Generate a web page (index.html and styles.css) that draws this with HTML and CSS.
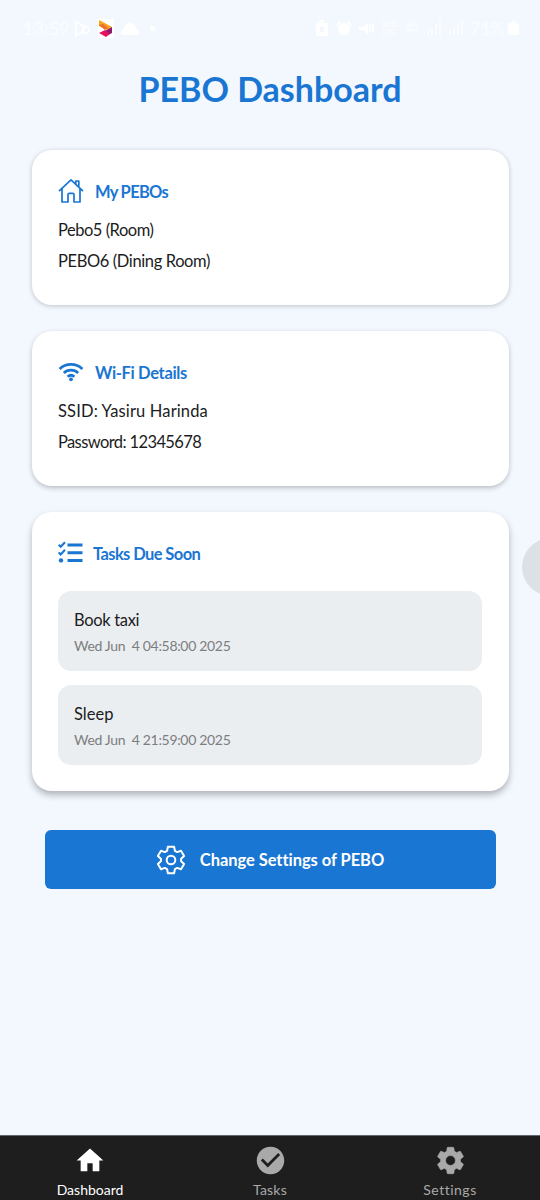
FILE: index.html
```html
<!DOCTYPE html>
<html lang="en">
<head>
<meta charset="utf-8">
<title>PEBO Dashboard</title>
<link rel="stylesheet" href="styles.css">
</head>
<body>
<div class="app">
  <header class="status">
    <div class="status-left">
      <span class="clock">13:59</span>
      <svg width="17" height="17" viewBox="0 0 17 17" fill="none" stroke="#fff" stroke-width="1.6"><path d="M2 1.5v14l7-4M2 1.5l10 6"/><circle cx="12" cy="10" r="3.2"/></svg>
      <svg class="brand" width="16" height="19" viewBox="0 0 16 19"><path fill="#fff" d="M0 0h16v19H0z"/><path fill="#f9a21b" d="M1 1l13 7-5 3-8-4z"/><path fill="#ef6c2f" d="M1 6l4-1 5 4-3 2z"/><path fill="#8b1a72" d="M14 8v6l-4 2-3-4z"/><path fill="#e5125d" d="M1 14l6-3 5 4-4 3z"/></svg>
      <svg width="18" height="15" viewBox="0 0 18 15"><path fill="#fff" d="M1 14a3.500 3.500 0 0 1 2-6 6 6 0 0 1 12 0 3.500 3.500 0 0 1 2 6z"/></svg>
      <span class="dot"></span>
    </div>
    <div class="status-right">
      <svg width="14" height="16" viewBox="0 0 14 16"><path fill="#fff" fill-rule="evenodd" d="M1 3h3V0h5v3h4v13H1zM5 7v5h4V7z"/></svg>
      <svg width="16" height="16" viewBox="0 0 16 16" fill="#fff"><circle cx="8" cy="9" r="6"/><path d="M0 4l4-3 1 2-4 3zM16 4l-4-3-1 2 4 3z"/></svg>
      <svg width="16" height="16" viewBox="0 0 16 16"><path fill="#fff" d="M0 7h4l5-4v11l-5-4H0z"/><path stroke="#fff" stroke-width="1.5" fill="none" d="M11 4v8M14 3v10"/></svg>
      <span class="volte">VoD<br>LTE</span>
      <svg class="faint" width="14" height="16" viewBox="0 0 14 16" fill="none" stroke="#fff" stroke-width="1.4"><path d="M1 5h9M1 10h12M5 1v13M10 3l3 3"/></svg>
      <svg class="faint" width="15" height="16" viewBox="0 0 15 16" fill="#fff"><path d="M1 11h2v4H1zM5 8h2v7H5zM9 4h2v11H9zM13 1h2v14h-2z"/></svg>
      <svg class="faint" width="15" height="16" viewBox="0 0 15 16" fill="#fff"><path d="M1 11h2v4H1zM5 8h2v7H5zM9 4h2v11H9zM13 1h2v14h-2z"/></svg>
      <span class="battery-text">71%</span>
      <svg width="11" height="14" viewBox="0 0 11 14" fill="#fff"><rect y="2" width="11" height="12" rx="2"/><path d="M4 0h3v3H4z"/></svg>
    </div>
  </header>

  <main class="content">
    <h1 class="title"><span class="t-title">PEBO Dashboard</span></h1>

    <section class="card card-first">
      <h2 class="card-head">
        <svg class="head-icon" width="26" height="26" viewBox="0 0 26 26" fill="none" stroke="#1976d2" stroke-width="1.700" stroke-linejoin="round" stroke-linecap="round"><path d="M1.500 12.600L13 1.800l11.500 10.800M4 10.500V24h6v-7.500a1.200 1.200 0 0 1 1.200-1.200h3.600a1.200 1.200 0 0 1 1.200 1.200V24h6V10.500M17.800 6V3h3v6"/></svg>
        <span class="t-pebos">My PEBOs</span>
      </h2>
      <p class="line"><span class="t-room">Pebo5 (Room)</span></p>
      <p class="line"><span class="t-dining">PEBO6 (Dining Room)</span></p>
    </section>

    <section class="card">
      <h2 class="card-head">
        <svg class="head-icon" width="26" height="26" viewBox="0 0 26 26" fill="none" stroke="#1976d2" stroke-width="2.700" stroke-linecap="butt"><path d="M1.600 9.900c6.400-6.100 16.400-6.100 22.800 0M5.800 14c4.100-3.800 10.300-3.800 14.400 0M9.600 17.800c2-1.800 4.800-1.800 6.800 0"/><circle cx="13" cy="20.300" r="1.900" fill="#1976d2" stroke="none"/></svg>
        <span class="t-wifi">Wi-Fi Details</span>
      </h2>
      <p class="line"><span class="t-ssid">SSID: Yasiru Harinda</span></p>
      <p class="line"><span class="t-pass">Password: 12345678</span></p>
    </section>

    <section class="card card-tasks">
      <h2 class="card-head">
        <svg class="head-icon tasks-icon" width="25" height="26" viewBox="0 0 25 26" fill="none" stroke="#1976d2" stroke-width="3"><path d="M9.500 5H24.500M9.500 12.700H24.500M9.500 20.400H24.500"/><path stroke-width="2.100" d="M.7 4.800l2 2 4.300-4.600M.7 12.400l2 2L7 9.800"/><circle cx="3" cy="20.400" r="2.200" fill="#1976d2" stroke="none"/></svg>
        <span class="t-due">Tasks Due Soon</span>
      </h2>
      <div class="task">
        <p class="task-name"><span class="t-taxi">Book taxi</span></p>
        <p class="task-time"><span class="t-time">Wed Jun&nbsp; 4 04:58:00 2025</span></p>
      </div>
      <div class="task">
        <p class="task-name"><span class="t-sleep">Sleep</span></p>
        <p class="task-time"><span class="t-time">Wed Jun&nbsp; 4 21:59:00 2025</span></p>
      </div>
    </section>

    <button class="change">
      <svg width="30" height="30" viewBox="0 0 30 30" fill="none" stroke="#fff" stroke-width="2" stroke-linejoin="round"><path d="M11.900 1.800h6.200l.8 4 2.300 1.300 3.800-1.300 3.100 5.300-3 2.600v2.600l3 2.600-3.100 5.300-3.800-1.300-2.300 1.300-.8 4h-6.200l-.8-4-2.300-1.300L5 24.200l-3.100-5.300 3-2.600v-2.600l-3-2.600L5 5.800l3.800 1.300 2.300-1.300z"/><circle cx="15" cy="15" r="4.300"/></svg>
      <span class="t-change">Change Settings of PEBO</span>
    </button>
  </main>

  <nav class="tabs">
    <a class="tab active">
      <svg width="32" height="32" viewBox="0 0 24 24" fill="#fff"><path d="M10 20v-6h4v6h5v-8h3L12 3 2 12h3v8z"/></svg>
      <span class="t-dash">Dashboard</span>
    </a>
    <a class="tab">
      <svg width="33" height="33" viewBox="0 0 24 24" fill="#a9a9a9"><path d="M12 2C6.480 2 2 6.480 2 12s4.480 10 10 10 10-4.480 10-10S17.520 2 12 2zm-2 15l-5-5 1.410-1.410L10 14.170l7.590-7.590L19 8l-9 9z"/></svg>
      <span class="t-tasks">Tasks</span>
    </a>
    <a class="tab">
      <svg width="33" height="33" viewBox="0 0 24 24" fill="#a9a9a9" stroke="#a9a9a9" stroke-width=".5"><path d="M19.140 12.940c.04-.3.060-.61.060-.94s-.02-.64-.07-.94l2.030-1.580c.18-.14.23-.41.12-.61l-1.920-3.320c-.12-.22-.37-.29-.59-.22l-2.390.96c-.5-.38-1.030-.7-1.620-.94l-.36-2.540c-.04-.24-.24-.41-.48-.41h-3.840c-.24 0-.43.17-.47.41l-.36 2.540c-.59.24-1.130.57-1.620.94l-2.390-.96c-.22-.08-.47 0-.59.22L2.740 8.870c-.12.21-.08.47.12.61l2.030 1.580c-.05.3-.09.63-.09.94s.02.64.07.94l-2.030 1.580c-.18.14-.23.41-.12.61l1.920 3.320c.12.22.37.29.59.22l2.390-.96c.5.38 1.030.7 1.620.94l.36 2.540c.05.24.24.41.48.41h3.840c.24 0 .44-.17.47-.41l.36-2.540c.59-.24 1.130-.56 1.620-.94l2.390.96c.22.08.47 0 .59-.22l1.920-3.320c.12-.22.07-.47-.12-.61l-2.010-1.580zM12 15.600a3.600 3.600 0 1 1 0-7.200 3.600 3.600 0 0 1 0 7.200z"/></svg>
      <span class="t-set">Settings</span>
    </a>
  </nav>
  <div class="edge-handle"></div>
</div>
</body>
</html>
```
FILE: styles.css
```css
* { box-sizing: border-box; margin: 0; padding: 0; }
body { background: #f3f8ff; font-family: Lato, "Open Sans", sans-serif; color: #1c1c1e; }
svg { display: block; flex: none; }
.app { position: relative; width: 540px; height: 1200px; overflow: hidden; display: flex; flex-direction: column; }
span { white-space: nowrap; }

.status { height: 56px; padding: 0 21px 0 23px; display: flex; align-items: center; justify-content: space-between; color: rgba(255, 255, 255, .7); }
.status-left { display: flex; align-items: center; gap: 7px; }
.status-right { display: flex; align-items: center; gap: 7px; }
.clock, .battery-text { font-size: 18px; }
.clock { width: 44px; }
.battery-text { margin-right: -4px; }
.volte { font-size: 8px; line-height: 8px; font-weight: 700; }
.faint { opacity: .6; }
.dot { width: 5px; height: 5px; margin-left: 4px; border-radius: 50%; background: #fff; }

.content { flex: 1; padding: 0 31.5px; display: flex; flex-direction: column; }
.title { height: 68px; margin-bottom: 26px; line-height: 66px; text-align: center; font-size: 34px; font-weight: 700; color: #1976d2; }

.card { height: 155px; margin-bottom: 26px; padding: 26.5px 26.5px; border-radius: 20px; background: #fff; box-shadow: 0 2px 5px rgba(0, 0, 0, .24); }
.card-first { box-shadow: 0 1px 5px rgba(0, 0, 0, .22); }
.card-tasks { height: 278.5px; margin-bottom: 39.5px; box-shadow: 0 4px 7px rgba(0, 0, 0, .28); }
.card-head { display: flex; align-items: center; height: 29px; margin-bottom: 9px; gap: 11px; font-size: 16.5px; font-weight: 700; color: #1976d2; }
.card-head span { padding-top: 1px; }
.card-tasks .card-head { margin-bottom: 23.5px; gap: 10px; }
.line { height: 31px; line-height: 30px; font-size: 16.5px; }

.t-pebos { letter-spacing: -.7px; }
.t-room { letter-spacing: -.48px; }
.t-dining { letter-spacing: -.38px; }
.t-wifi { letter-spacing: -.34px; }
.t-ssid { letter-spacing: .14px; }
.t-pass { letter-spacing: -.61px; }
.t-due { letter-spacing: -.6px; }
.t-taxi { letter-spacing: -.33px; }
.t-time { letter-spacing: -.32px; }
.t-change { letter-spacing: -.05px; }
.t-tasks { letter-spacing: .2px; }
.t-set { letter-spacing: .5px; }

.task { height: 80px; margin-bottom: 14px; padding: 15px 16px; border-radius: 13px; background: #ebeef1; }
.task-name { height: 27px; line-height: 28px; font-size: 16.5px; }
.task-time { height: 26px; line-height: 26px; font-size: 14px; color: #7c7d80; }

.change { display: flex; align-items: center; justify-content: center; gap: 14px; height: 59px; margin: 0 13px; border: 0; border-radius: 6px; background: #1976d2; color: #fff; font: 700 16.5px Lato, "Open Sans", sans-serif; }
.t-change { padding-top: 1px; }

.tabs { display: flex; height: 65px; border-top: 1px solid #62676c; background: #1e1e1e; }
.tab { flex: 1; display: flex; flex-direction: column; align-items: center; padding-top: 8px; font-size: 14px; line-height: 18px; color: #a9a9a9; }
.tab svg { height: 33px; margin-bottom: 4px; }
.active { color: #fff; }

.edge-handle { position: absolute; left: 522px; top: 538px; width: 58px; height: 58px; border-radius: 50%; background: #dce1e5; }
```
